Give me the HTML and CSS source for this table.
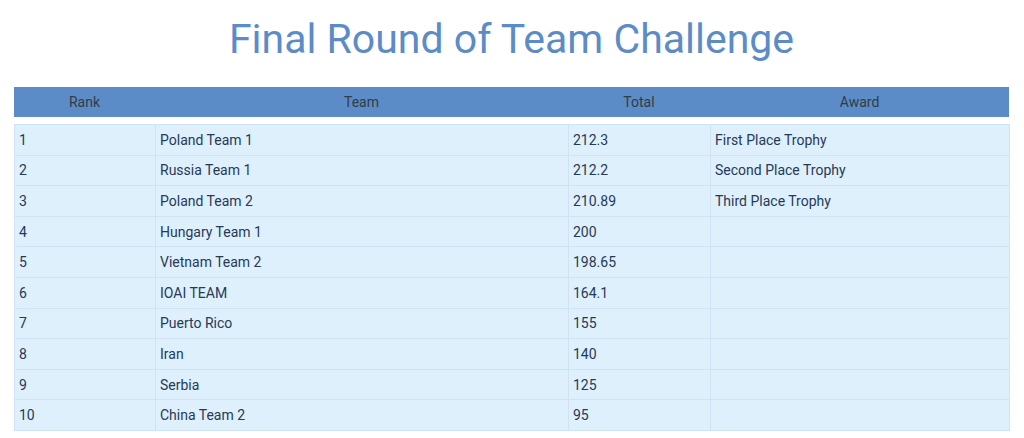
FILE: index.html
```html
<!DOCTYPE html>
<html>
<head>
<meta charset="utf-8">
<link rel="stylesheet" href="styles.css">
</head>
<body>
<div class="page">
  <h1 class="title">Final Round of Team Challenge</h1>
  <table class="grid head">
    <colgroup><col class="c1"><col class="c2"><col class="c3"><col class="c4"></colgroup>
    <thead>
      <tr><th>Rank</th><th>Team</th><th>Total</th><th>Award</th></tr>
    </thead>
  </table>
  <table class="grid body">
    <colgroup><col class="c1"><col class="c2"><col class="c3"><col class="c4"></colgroup>
    <tbody>
      <tr><td>1</td><td>Poland Team 1</td><td>212.3</td><td>First Place Trophy</td></tr>
      <tr><td>2</td><td>Russia Team 1</td><td>212.2</td><td>Second Place Trophy</td></tr>
      <tr><td>3</td><td>Poland Team 2</td><td>210.89</td><td>Third Place Trophy</td></tr>
      <tr><td>4</td><td>Hungary Team 1</td><td>200</td><td></td></tr>
      <tr><td>5</td><td>Vietnam Team 2</td><td>198.65</td><td></td></tr>
      <tr><td>6</td><td>IOAI TEAM</td><td>164.1</td><td></td></tr>
      <tr><td>7</td><td>Puerto Rico</td><td>155</td><td></td></tr>
      <tr><td>8</td><td>Iran</td><td>140</td><td></td></tr>
      <tr><td>9</td><td>Serbia</td><td>125</td><td></td></tr>
      <tr><td>10</td><td>China Team 2</td><td>95</td><td></td></tr>
    </tbody>
  </table>
</div>
</body>
</html>
```

FILE: styles.css
```css
* { box-sizing: border-box; }
html, body { margin: 0; padding: 0; background: #fff; }
body { font-family: Roboto, "Liberation Sans", sans-serif; }
.page { padding: 16px 15px 0 14px; }
.title {
  margin: 0 0 24px;
  font-size: 41px;
  line-height: 47px;
  font-weight: 400;
  color: #5b8cc7;
  text-align: center;
}
.grid {
  width: 995px;
  table-layout: fixed;
  border-collapse: collapse;
  font-size: 14px;
}
.c1 { width: 141px; }
.c2 { width: 413px; }
.c3 { width: 142px; }
.c4 { width: 299px; }
.head th {
  background: #5b8cc7;
  color: #333b44;
  font-weight: 400;
  height: 30px;
  padding: 0 5px;
  text-align: center;
}
.body { margin-top: 7px; background: #dff0fd; }
.body td {
  height: 30.6px;
  padding: 0 4px;
  color: #263957;
  border: 1px solid #cfe3f5;
  text-align: left;
}
```
